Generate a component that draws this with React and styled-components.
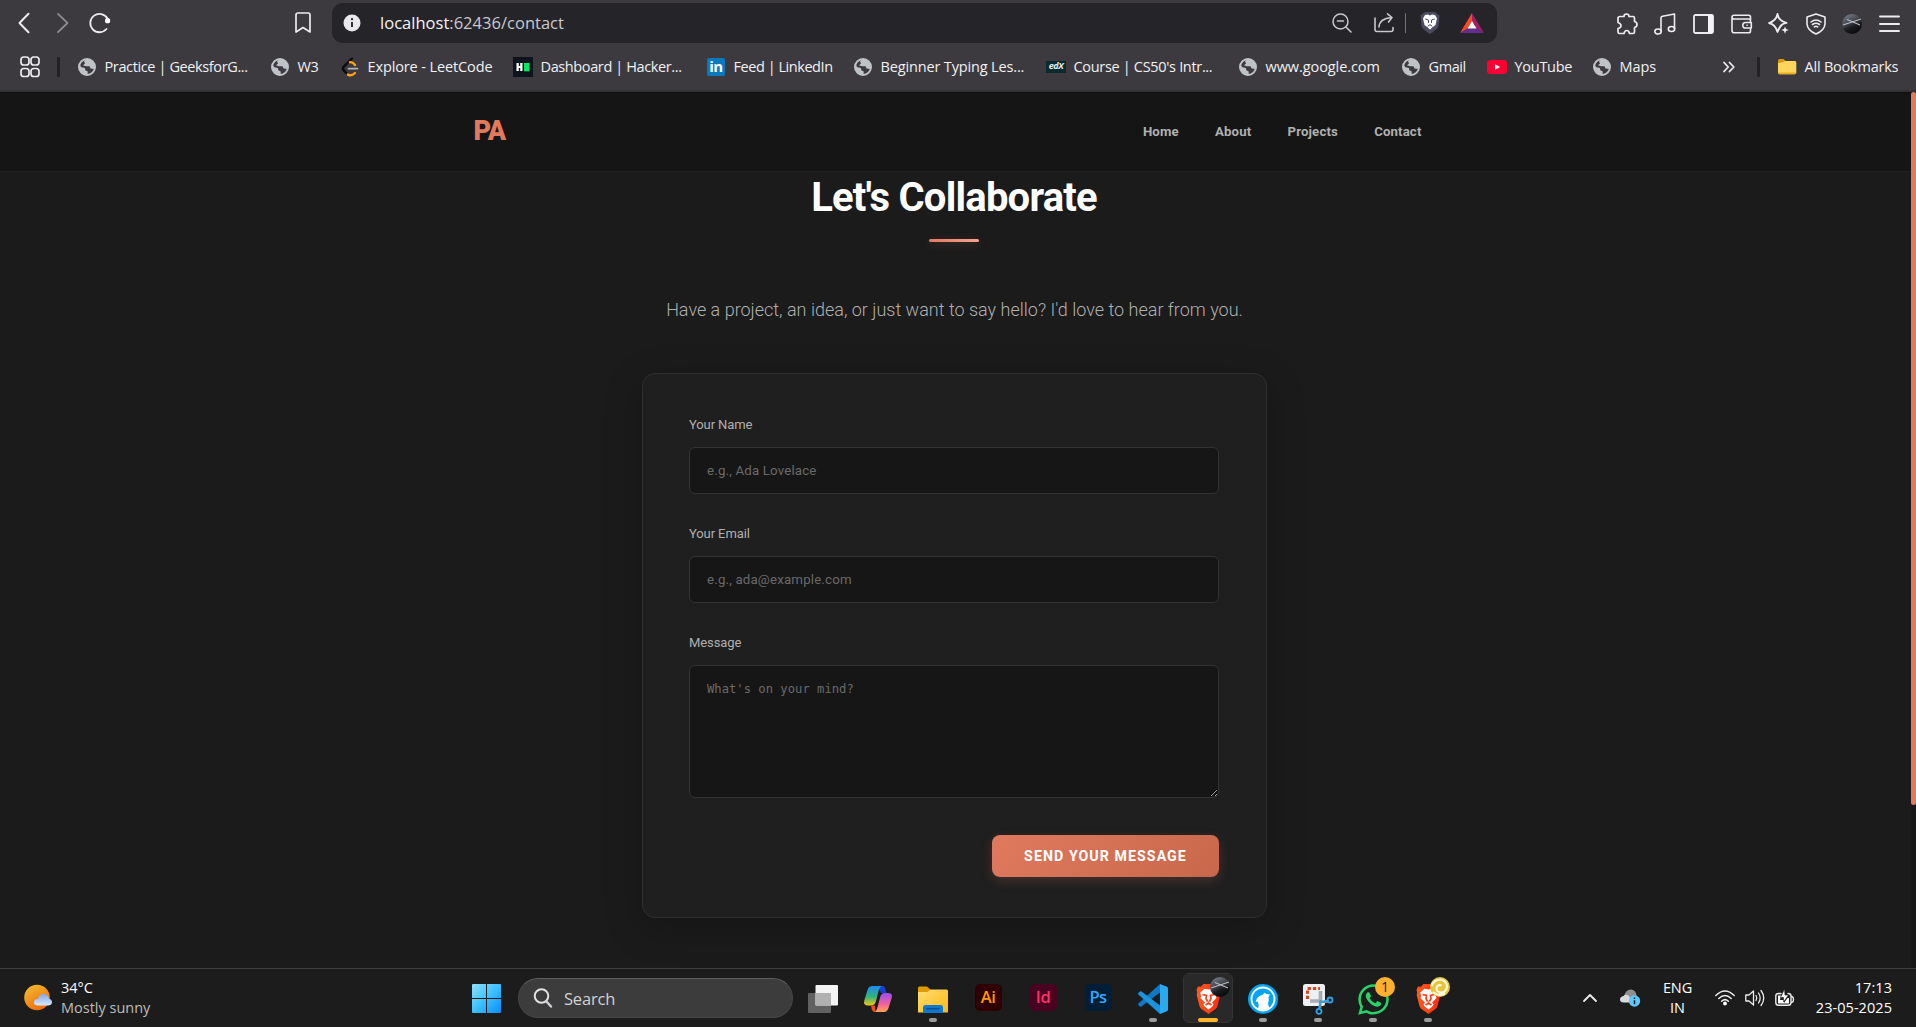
import React from "react";
import styled, { createGlobalStyle, css } from "styled-components";
import { FaWhatsapp } from "react-icons/fa";

const ui = `"Open Sans", "Noto Sans", sans-serif`;
const body = `Roboto, "Open Sans", sans-serif`;

const GlobalStyle = createGlobalStyle`
  * { box-sizing: border-box; }
  html, body { margin: 0; padding: 0; background: #1b1b1b; overflow: hidden; }
  svg { display: block; flex: none; overflow: visible; }
`;

const Screen = styled.div`
  display: flex;
  flex-direction: column;
  width: 1916px;
  height: 1027px;
  overflow: hidden;
`;

/* ---------- browser chrome ---------- */
const Chrome = styled.div`
  height: 92px;
  flex: none;
  background: #3c3a3f;
  border-bottom: 2px solid #323136;
  color: #f1f1f3;
  font-family: ${ui};
`;
const Toolbar = styled.div`
  display: flex;
  align-items: center;
  height: 47px;
  padding: 0 16px 1px 14px;
`;
const IconSlot = styled.div`
  display: flex;
  align-items: center;
  justify-content: center;
  flex: none;
  width: ${(p) => p.$w}px;
  height: 20px;
`;
const NavIcons = styled.div`
  display: flex;
  align-items: center;
  width: 318px;
`;
const AddressBar = styled.div`
  display: flex;
  align-items: center;
  width: 1165px;
  height: 40px;
  padding: 0 9px;
  border-radius: 11px;
  background: #252429;
`;
const Url = styled.div`
  flex: 1;
  padding-left: 17px;
  font-size: 16.5px;
  line-height: 22px;
  letter-spacing: 0.02px;
  color: #c9c8ce;
  b { font-weight: 400; color: #f4f4f6; }
`;
const Bar = styled.div`
  width: ${(p) => p.$w}px;
  height: 20px;
  margin: ${(p) => p.$m};
  background: ${(p) => p.$c};
  border-radius: 1px;
  flex: none;
`;
const Actions = styled.div`
  display: flex;
  align-items: center;
  margin-left: auto;
  gap: 16.6px;
  padding-top: 1px;
`;
const BookmarkRow = styled.div`
  display: flex;
  align-items: center;
  height: 40px;
  padding: 0 16px 0 20px;
`;
const BookmarkItem = styled.div`
  display: flex;
  align-items: center;
  flex: none;
  width: ${(p) => p.$w}px;
  font-size: 14.5px;
  line-height: 20px;
  letter-spacing: ${(p) => p.$ls || 0}px;
  white-space: nowrap;
  gap: 7.5px;
`;

/* ---------- web page ---------- */
const Viewport = styled.div`
  display: flex;
  height: 876px;
  flex: none;
  background: #1b1b1b;
  font-family: ${body};
`;
const Page = styled.div`
  width: 1911px;
  display: flex;
  flex-direction: column;
`;
const ScrollTrack = styled.div`
  width: 5px;
  background: #171717;
`;
const ScrollThumb = styled.div`
  height: 713px;
  border-radius: 3px;
  background: #e07a5f;
`;
const Header = styled.header`
  height: 80px;
  flex: none;
  display: flex;
  justify-content: center;
  background: #151515;
  border-top: 1px solid #0e0e0f;
  border-bottom: 1px solid #212121;
`;
const HeaderInner = styled.div`
  width: 964px;
  display: flex;
  align-items: center;
  justify-content: space-between;
  padding: 0 16px 2px 0;
`;
const Logo = styled.div`
  font-size: 27px;
  font-weight: 900;
  line-height: 32px;
  letter-spacing: -1px;
  color: #e07a5f;
`;
const Nav = styled.nav`
  display: flex;
  gap: 36.2px;
  padding-top: 2px;
`;
const NavLink = styled.a`
  font-size: 13.2px;
  line-height: 16px;
  font-weight: 700;
  letter-spacing: 0.15px;
  color: #b0b0b0;
`;
const Main = styled.main`
  display: flex;
  flex-direction: column;
  align-items: center;
  padding-right: 2px;
`;
const Title = styled.h1`
  margin: 2px 1px 0 0;
  font-size: 40px;
  line-height: 48px;
  font-weight: 700;
  letter-spacing: -0.78px;
  color: #fff;
`;
const Rule = styled.div`
  width: 50px;
  height: 3px;
  margin: 17px 1px 0 0;
  border-radius: 2px;
  background: linear-gradient(90deg, #e07a5f, #f2a48f);
  box-shadow: 0 2px 8px rgba(224, 122, 95, 0.25);
`;
const Lead = styled.p`
  margin: 56px 0 0;
  font-size: 18px;
  line-height: 24px;
  font-weight: 300;
  color: #b0b0b0;
`;
const Card = styled.form`
  width: 625px;
  height: 545px;
  margin-top: 51px;
  padding: 41px 47px 0 46px;
  border: 1px solid #2f2f2f;
  border-radius: 13px;
  background: #1f1f1f;
  box-shadow: 0 10px 38px rgba(0, 0, 0, 0.22);
  display: flex;
  flex-direction: column;
`;
const Label = styled.label`
  display: block;
  height: 32px;
  font-size: 13px;
  line-height: 20px;
  letter-spacing: -0.1px;
  color: #b0b0b0;
`;
const fieldBox = css`
  display: block;
  width: 100%;
  border: 1px solid #333;
  border-radius: 6px;
  background: #161616;
  color: #eee;
  outline: none;
  &::placeholder { color: #6a6a6a; opacity: 1; }
`;
const Input = styled.input`
  ${fieldBox}
  height: 47px;
  margin-bottom: 30px;
  padding: 0 17px;
  font: 400 13.3px ${body};
  letter-spacing: 0.16px;
`;
const TextArea = styled.textarea`
  ${fieldBox}
  height: 133px;
  padding: 15px 17px;
  font: 400 12.2px/17px "DejaVu Sans Mono", monospace;
  resize: vertical;
`;
const Submit = styled.button`
  align-self: flex-end;
  width: 227px;
  height: 42px;
  margin-top: 37px;
  padding: 0;
  border: 0;
  border-radius: 8px;
  background: linear-gradient(135deg, #e07a5f, #c8674b);
  box-shadow: 0 4px 12px rgba(224, 122, 95, 0.2);
  color: #fff;
  font: 700 14.2px/20px ${body};
  letter-spacing: 1.06px;
`;

/* ---------- taskbar ---------- */
const Taskbar = styled.div`
  display: flex;
  align-items: center;
  flex: 1;
  border-top: 1px solid #3e3e3e;
  background: #1c1c1c;
  color: #fff;
  font-family: ${ui};
`;
const Weather = styled.div`
  display: flex;
  align-items: center;
  gap: 9px;
  width: 472px;
  padding-left: 24px;
`;
const Lines = styled.div`
  width: ${(p) => p.$w || "auto"};
  font-size: 14.5px;
  line-height: 20px;
  letter-spacing: ${(p) => p.$ls || 0}px;
  text-align: ${(p) => p.$align || "left"};
  white-space: nowrap;
  span { display: block; }
  span + span { color: ${(p) => p.$second || "#fff"}; }
`;
const SearchPill = styled.div`
  display: flex;
  align-items: center;
  gap: 12px;
  width: 275px;
  height: 40px;
  margin: 0 2.5px 0 17px;
  padding: 0 15px;
  border: 1px solid #464646;
  border-top-color: #5e5e5e;
  border-radius: 20px;
  background: #3c3c3c;
  font-size: 16.5px;
  letter-spacing: -0.2px;
  color: #d2d2d2;
`;
const AppSlot = styled.div`
  width: 55px;
  height: 58px;
  flex: none;
  display: flex;
  flex-direction: column;
  align-items: center;
  justify-content: center;
`;
const AppTile = styled.div`
  position: relative;
  width: 50px;
  height: 50px;
  display: flex;
  flex-direction: column;
  align-items: center;
  padding-top: 10px;
  border-radius: 6px;
  border: 1px solid ${(p) => (p.$active ? "#343434" : "transparent")};
  background: ${(p) => (p.$active ? "#292929" : "transparent")};
`;
const AppIcon = styled.div`
  width: 30px;
  height: 30px;
  display: flex;
  align-items: center;
  justify-content: center;
  flex: none;
`;
const Marker = styled.i`
  display: block;
  width: ${(p) => (p.$active ? 20 : 8)}px;
  height: 4px;
  margin-top: 4px;
  border-radius: 2px;
  background: ${(p) => (p.$active ? "#ffb62e" : "#9c9c9c")};
`;
const Badge = styled.div`
  position: absolute;
  top: 3px;
  right: 2px;
  width: 20px;
  height: 20px;
  border-radius: 50%;
  background: ${(p) => p.$bg || "none"};
  color: #222;
  font-size: 14px;
  line-height: 20px;
  text-align: center;
`;
const AdobeTile = styled.div`
  width: 27px;
  height: 27px;
  margin: 0 0 3px;
  border-radius: 5px;
  background: ${(p) => p.$bg};
  color: ${(p) => p.$fg};
  font-weight: 600;
  font-size: 16.5px;
  line-height: 25px;
  letter-spacing: -0.5px;
  text-align: center;
`;
const Tray = styled.div`
  display: flex;
  align-items: center;
  margin-left: auto;
  padding-right: 24px;
`;

/* ---------- icons ---------- */
const line = (w = 1.6, c = "#ececef") => ({
  fill: "none",
  stroke: c,
  strokeWidth: w,
  strokeLinecap: "round",
  strokeLinejoin: "round",
});

const Globe = () => (
  <svg width="20" height="20" viewBox="0 0 20 20">
    <circle cx="10" cy="10" r="8" fill="#3c3a3f" stroke="#bfc3c8" strokeWidth="2" />
    <path d="M2.5 8 3 13.500 7.500 18 10.500 17.500 10.800 14.500 8.300 13.300 8 11 4.500 10.300Z" fill="#bfc3c8" />
    <path d="M9 2 7 4 8 6.500 6 8.300 9 9.200 12.500 9.200 13.500 11.500 17.800 12 18 7 14.500 3Z" fill="#bfc3c8" />
  </svg>
);
const LeetCode = () => (
  <svg width="20" height="20" viewBox="0 0 20 20" fill="none" strokeLinecap="round" strokeLinejoin="round">
    <path d="M12 1.500 4 9.300Q1.800 11.500 4 13.700L6.500 16.200" stroke="#0b0b0b" strokeWidth="2.400" />
    <path d="M8 17.600Q11.500 19.500 15 16" stroke="#ffa116" strokeWidth="2.400" />
    <path d="M10 5.200Q12.500 4.800 15 8" stroke="#ffa116" strokeWidth="2.400" />
    <path d="M8.500 11.600H17.500" stroke="#b3b3b3" strokeWidth="1.800" />
  </svg>
);
const HackerRank = () => (
  <svg width="20" height="20" viewBox="0 0 20 20">
    <rect width="20" height="20" fill="#0e141e" />
    <path d="M3.500 6H5.800V9H7.200V6H9.500V14H7.200V11H5.800V14H3.500Z" fill="#fff" />
    <rect x="11" y="6" width="5.500" height="8.300" fill="#00ea64" />
  </svg>
);
const LinkedInGlyph = styled.div`
  width: 18px;
  height: 18px;
  margin: 0 1px;
  border-radius: 2px;
  background: #0a7abf;
  color: #fff;
  font: 700 15px/17px ${ui};
  letter-spacing: -0.4px;
  text-align: center;
`;
const EdxGlyph = styled.div`
  width: 20px;
  height: 12px;
  background: #0b2a2f;
  color: #e6ecec;
  font: italic 700 9px/10px ${ui};
  letter-spacing: -0.4px;
  text-align: center;
`;
const YouTube = () => (
  <svg width="20" height="20" viewBox="0 0 20 20">
    <rect y="3" width="20" height="14" rx="3.500" fill="#ff0033" />
    <path d="M8 7.200 13.200 10 8 12.800Z" fill="#fff" />
  </svg>
);
const SmallFolder = () => (
  <svg width="20" height="20" viewBox="0 0 20 20">
    <path d="M1 3.500Q1 2 2.500 2H6.500L8.500 4V8H1Z" fill="#d9970b" />
    <path d="M1 6Q4 6.500 8 4H18Q19.300 4 19.300 5.500V15.500Q19.300 17.200 17.600 17.200H2.600Q1 17.200 1 15.500Z" fill="#ffd55c" />
    <path d="M1 15.500H19.300Q19.300 17.200 17.600 17.200H2.600Q1 17.200 1 15.500Z" fill="#e9ad23" />
  </svg>
);
const Planet = () => (
  <svg width="20" height="20" viewBox="0 0 20 20">
    <defs>
      <linearGradient id="planet" x1="0.200" y1="0" x2="0.700" y2="1">
        <stop offset="0" stopColor="#7b7f8a" />
        <stop offset="0.400" stopColor="#45474f" />
        <stop offset="0.650" stopColor="#1a1b1f" />
        <stop offset="1" stopColor="#08080a" />
      </linearGradient>
    </defs>
    <circle cx="10" cy="10" r="10" fill="url(#planet)" />
    <path d="M1 11 19 5M5 5.500 18 11" stroke="#b9bcc4" strokeWidth="1.100" />
  </svg>
);
const Swirl = () => (
  <svg width="20" height="20" viewBox="0 0 20 20">
    <circle cx="10" cy="10" r="10" fill="#e8c33c" />
    <path d="M1.500 9Q4 2.500 11 2.500 17 4 17 10 16 16 10 15.500 6 14.500 6.500 10.500 8 7 11.500 8.500M3 15Q8 20 15 16.500" fill="none" stroke="#fff8dc" strokeWidth="2.200" />
  </svg>
);
const Lion = () => (
  <svg width="25" height="30" viewBox="0 0 25 30">
    <defs>
      <linearGradient id="lion" x1="0" y1="0" x2="1" y2="0">
        <stop offset="0" stopColor="#ff5a1f" />
        <stop offset="1" stopColor="#fb2b12" />
      </linearGradient>
    </defs>
    <path d="M7.500 0H17.500L20 2.800 23 2.500 24.500 6 23.800 8.500 24.300 11 21.500 22Q21 24 19.500 25L12.500 30 5.500 25Q4 24 3.500 22L.7 11 1.200 8.500 .5 6 2 2.500 5 2.800Z" fill="url(#lion)" />
    <path d="M8.500 4.800 12.500 5.500 16.500 4.800 20.800 8.800 19.800 12 20.500 14 16 18.500 17.500 20.500 16.300 22.500 12.500 25.500 8.700 22.500 7.500 20.500 9 18.500 4.500 14 5.200 12 4.200 8.800Z" fill="#fff" />
    <path d="M6.500 10.500 10.500 11.500 10 14.500 11.500 17.500M18.500 10.500 14.500 11.500 15 14.500 13.500 17.500M9.500 21 12.500 19.200 15.500 21" fill="none" stroke="#fb401a" strokeWidth="1.700" />
    <path d="M11 18 12.500 17.300 14 18 12.500 19.300Z" fill="#fb401a" />
  </svg>
);

const Back = () => (
  <svg width="20" height="20" viewBox="0 0 20 20"><path d="M14.500 .8 5.500 10l9 9.200" {...line(2)} /></svg>
);
const Forward = () => (
  <svg width="20" height="20" viewBox="0 0 20 20"><path d="M5 .8 14.500 10 5 19.200" {...line(1.8, "#8b8a8f")} /></svg>
);
const Reload = () => (
  <svg width="22" height="22" viewBox="0 0 22 22">
    <path d="M17.500 17A9.200 9.200 0 1 1 18.500 6.500" {...line(1.8)} />
    <circle cx="18.600" cy="8.700" r="2.600" fill="#fff" />
  </svg>
);
const BookmarkIcon = () => (
  <svg width="16" height="22" viewBox="0 0 16 22">
    <path d="M3 1H13Q15 1 15 3V20L8 15.500 1 20V3Q1 1 3 1Z" {...line(1.7)} />
  </svg>
);
const Info = () => (
  <svg width="18" height="18" viewBox="0 0 18 18">
    <circle cx="9" cy="9" r="8.500" fill="#e9e8ee" />
    <path d="M9 8V13" stroke="#252429" strokeWidth="1.900" />
    <circle cx="9" cy="5.200" r="1.150" fill="#252429" />
  </svg>
);
const ZoomOut = () => (
  <svg width="20" height="20" viewBox="0 0 20 20">
    <circle cx="8.500" cy="8.500" r="7.500" {...line(1.5, "#c8c7cc")} />
    <path d="M5.500 8H11.500M14 14 19 19" {...line(1.6, "#c8c7cc")} />
  </svg>
);
const Share = () => (
  <svg width="20" height="20" viewBox="0 0 20 20">
    <path d="M1 5V16.500Q1 18.500 3 18.500H17Q19 18.500 19 16.500V14.500M5 14Q5.500 5.500 17.500 4.500M13.500 .8 18 4.500 14.500 9" {...line(1.6, "#c8c7cc")} />
  </svg>
);
const ShieldLion = () => (
  <svg width="20" height="22" viewBox="0 0 20 22">
    <path d="M5 0H15L19.500 3.500 18.500 14Q18 17 10 22 2 17 1.500 14L.5 3.500Z" fill="#4a4b5e" />
    <path d="M5 3 8 2.500 10 3.500 12 2.500 15 3 17 6.500 15.500 13 12.800 15 10 17.500 7.200 15 4.500 13 3 6.500Z" fill="#fff" />
    <path d="M5.500 7 8.500 8V10.500M14.500 7 11.500 8V10.500M8 14 10 12.700 12 14" {...line(1, "#4a4b5e")} />
  </svg>
);
const Bat = () => (
  <svg width="24" height="20" viewBox="0 0 24 20">
    <path d="M12 0 0 20 7.500 15.500 12 8Z" fill="#ff4724" />
    <path d="M12 0 24 20 16.500 15.500 12 8Z" fill="#9e1f63" />
    <path d="M0 20H24L16.500 15.500H7.500Z" fill="#662d91" />
    <path d="M12 8 16.500 15.500H7.500Z" fill="#fff" />
  </svg>
);
const Puzzle = () => (
  <svg width="22" height="22" viewBox="0 0 22 22">
    <path d="M4 3.500H8Q8 1 10.500 1T13 3.500H17Q18.500 3.500 18.500 5V8.500Q21 9 21 11.500T18.500 14.500V19Q18.500 20.500 17 20.500H13.500Q13 17.500 10.800 17.500T8 20.500H3.500Q2 20.500 2 19V15.500Q5 15 5 12.800T2 9.500V5.500Q2 3.500 4 3.500Z" {...line(1.7)} />
  </svg>
);
const Music = () => (
  <svg width="22" height="22" viewBox="0 0 22 22">
    <path d="M7 18V5Q7 3.500 8.500 3.200L20.500 1V15.500" {...line(1.6)} />
    <ellipse cx="4" cy="18.500" rx="3.200" ry="2.500" {...line(1.6)} />
    <ellipse cx="17.500" cy="16" rx="3.200" ry="2.500" {...line(1.6)} />
  </svg>
);
const Sidebar = () => (
  <svg width="21" height="20" viewBox="0 0 21 20">
    <rect x="1" y="1" width="19" height="18" rx="1.500" {...line(1.8)} />
    <path d="M15 1H20V19H15Z" fill="#f4f4f6" />
  </svg>
);
const Wallet = () => (
  <svg width="21" height="20" viewBox="0 0 21 20">
    <path d="M19.500 6V3Q19.500 1.200 17.800 1.200H3Q1 1.200 1 3.200V16.500Q1 18.800 3.200 18.800H17.500Q19.500 18.800 19.500 17V15M1 3.200Q1 5 3 5H17.500Q19.500 5 19.500 7V8.500H14.500Q11.800 8.500 11.800 11.300T14.500 14H20.300V8.500H18M16 11.200H16.200" {...line(1.6)} />
  </svg>
);
const Sparkle = () => (
  <svg width="21" height="21" viewBox="0 0 21 21">
    <path d="M9.500 1Q10.500 8 18.500 9.800 15 10.500 13.500 12 11.500 14 9.500 19 7.500 11.500 1 10 8 8 9.500 1Z" {...line(1.8)} />
    <path d="M17 13.500 18 16 20.800 17 18 18 17 20.800 16 18 13.300 17 16 16Z" fill="#f1f1f3" />
  </svg>
);
const VpnShield = () => (
  <svg width="20" height="22" viewBox="0 0 20 22">
    <path d="M10 1 19 4V11Q18.500 17.500 10 21 1.500 17.500 1 11V4Z" {...line(1.6)} />
    <path d="M5 9Q10 5 15 9M6.500 11.500Q10 9 13.500 11.500M8.300 13.800Q10 12.700 11.700 13.800" {...line(1.6)} />
  </svg>
);
const Menu = () => (
  <svg width="21" height="18" viewBox="0 0 21 18"><path d="M1 1.500H20M1 9H20M1 16H20" {...line(1.9)} /></svg>
);
const Apps = () => (
  <svg width="20" height="22" viewBox="0 0 20 22">
    {[[1, 1], [11, 1], [1, 12.5], [11, 12.5]].map(([x, y]) => (
      <rect key={`${x}-${y}`} x={x} y={y} width="8" height="8" rx="2.800" {...line(1.7)} />
    ))}
  </svg>
);
const Chevrons = () => (
  <svg width="12" height="12" viewBox="0 0 12 12"><path d="M1 1.500 5.200 6 1 10.500M6.500 1.500 10.800 6 6.500 10.500" {...line(1.8)} /></svg>
);

const SunCloud = () => (
  <svg width="28" height="28" viewBox="0 0 28 28">
    <defs>
      <linearGradient id="sun" x1="0" y1="0" x2="0.600" y2="1">
        <stop offset="0" stopColor="#f3c22e" />
        <stop offset="1" stopColor="#ef6c11" />
      </linearGradient>
      <linearGradient id="cloud" x1="0" y1="0" x2="0" y2="1">
        <stop offset="0" stopColor="#7ea9ee" />
        <stop offset="1" stopColor="#dbe8fb" />
      </linearGradient>
    </defs>
    <circle cx="13" cy="13.500" r="12.800" fill="url(#sun)" />
    <path d="M14 21.500Q10 21.500 10 18.300T14 15Q15 10 19.500 10T25 14.700Q28 15.500 28 18.300T24.500 21.500Z" fill="url(#cloud)" />
  </svg>
);
const WindowsLogo = () => (
  <svg width="29" height="29" viewBox="0 0 29 29">
    <defs>
      <linearGradient id="win" x1="0" y1="0" x2="29" y2="29" gradientUnits="userSpaceOnUse">
        <stop offset="0" stopColor="#8ce2ff" />
        <stop offset="0.500" stopColor="#3cc0ff" />
        <stop offset="1" stopColor="#0a8dff" />
      </linearGradient>
    </defs>
    <path d="M1 0H14V14H0V1Q0 0 1 0ZM15 0H28Q29 0 29 1V14H15ZM0 15H14V29H1Q0 29 0 28ZM15 15H29V28Q29 29 28 29H15Z" fill="url(#win)" />
  </svg>
);
const SearchIcon = () => (
  <svg width="18" height="20" viewBox="0 0 18 20">
    <circle cx="7.500" cy="8" r="6.800" {...line(2, "#e2e2e2")} />
    <path d="M12.500 13.500 17 18.500" {...line(2.400, "#cfd3d8")} />
  </svg>
);
const TaskView = () => (
  <svg width="30" height="29" viewBox="0 0 30 29">
    <rect x="0" y="8" width="23" height="20" rx="1" fill="#616161" />
    <rect x="7.500" y="0" width="22.500" height="20.500" rx="1" fill="#f3f3f3" />
    <rect x="7.500" y="8" width="15.500" height="12.500" fill="#b1b1b1" />
  </svg>
);
const Copilot = () => (
  <svg width="28" height="29" viewBox="0 0 28 29">
    <defs>
      <linearGradient id="cpL" x1="0" y1="0" x2="0" y2="1">
        <stop offset="0" stopColor="#1c8cf0" />
        <stop offset="0.550" stopColor="#2fb47c" />
        <stop offset="1" stopColor="#f5c518" />
      </linearGradient>
      <linearGradient id="cpR" x1="0" y1="0" x2="0" y2="1">
        <stop offset="0" stopColor="#9a4df0" />
        <stop offset="0.550" stopColor="#ee5fa0" />
        <stop offset="1" stopColor="#ffa552" />
      </linearGradient>
    </defs>
    <path d="M14 1H18.500Q20.500 1 21 3L22.500 8H17Z" fill="#1a3fcf" />
    <path d="M8.500 1H18Q15.500 2 14.800 5L12 16Q10.800 20.500 7 20.500H4Q-1 20.500 .3 15.500L3.500 5Q4.700 1 8.500 1Z" fill="url(#cpL)" />
    <path d="M7 20.500H11L11.500 27Q8.500 27 7.800 24.500Z" fill="#ee4b2b" />
    <path d="M20 27H10.500Q12.500 26 13.300 23L16.200 12Q17.200 8 21 8H24Q29 8 27.700 13L24.500 23Q23.200 27 20 27Z" fill="url(#cpR)" />
  </svg>
);
const Folder = () => (
  <svg width="30" height="29" viewBox="0 0 30 29">
    <defs>
      <linearGradient id="fold" x1="0" y1="0" x2="1" y2="1">
        <stop offset="0" stopColor="#ffde74" />
        <stop offset="1" stopColor="#fdb813" />
      </linearGradient>
    </defs>
    <path d="M0 3Q0 1.500 1.500 1.500H9L12.500 4.500V10H0Z" fill="#e09a05" />
    <path d="M0 7H9.500L12.500 4.500H28.500Q30 4.500 30 6V27.500H0Z" fill="url(#fold)" />
    <path d="M5 28V22.500Q5 20 7.500 20H22.500Q25 20 25 22.500V28Z" fill="#0f78d0" />
    <path d="M9 23.700H21" {...line(1.4, "#084f93")} />
  </svg>
);
const VSCode = () => (
  <svg width="30" height="30" viewBox="0 0 30 30">
    <path d="M22 0 29 2.800Q30 3.300 30 4.500V25.500Q30 26.700 29 27.200L22 30Z" fill="#29a9f2" />
    <path d="M22 0V8.500L3.500 22.500Q2.700 23 2 22.500L.4 21Q-.3 20.200 .4 19.500Z" fill="#0d79c4" />
    <path d="M22 30V21.500L3.500 7.500Q2.700 7 2 7.500L.4 9Q-.3 9.800 .4 10.500Z" fill="#1b94df" />
  </svg>
);
const LibreWolf = () => (
  <svg width="30" height="30" viewBox="0 0 30 30">
    <circle cx="15" cy="15" r="15" fill="#00a5f5" />
    <circle cx="15" cy="15" r="11.500" fill="none" stroke="#fff" strokeWidth="1.800" />
    <path d="M7.500 18Q9 12 14.500 11L16.500 8.500 18.500 10 22 10.500 20.500 13 20.800 16 20 20 21.500 24.500Q15 28 10 25 11.500 20.500 9.500 17.500Z" fill="#fff" />
  </svg>
);
const Snip = () => (
  <svg width="30" height="30" viewBox="0 0 30 30">
    <rect width="22" height="22" rx="2.500" fill="#eef0f3" />
    <path d="M4.500 15V4.500H17" fill="none" stroke="#d2441c" strokeWidth="3" strokeDasharray="3.300 2" />
    <path d="M7 17H19M17.500 7V19" stroke="#a6adb6" strokeWidth="3.600" />
    <path d="M16 18H25M17.500 16V24" stroke="#7e8790" strokeWidth="2" />
    <circle cx="27" cy="16" r="2.500" {...line(1.800, "#2ea3e8")} />
    <circle cx="16" cy="27.300" r="2.500" {...line(1.800, "#2ea3e8")} />
    <path d="M18 18 25 16.500M17 19 16 25" {...line(1.800, "#2ea3e8")} />
  </svg>
);

const CaretUp = () => (
  <svg width="14" height="8" viewBox="0 0 14 8"><path d="M1 7 7 1 13 7" {...line(1.800)} /></svg>
);
const CloudInfo = () => (
  <svg width="20" height="18" viewBox="0 0 20 18">
    <path d="M4 7Q6 0 11.500 .5 16 1.500 16.500 6.500L12 13H4Z" fill="#8f8f8f" />
    <path d="M3.500 13.500Q0 13.500 0 10.500T3.500 7Q6 4.500 9 7L12 13.500Z" fill="#d9d9d9" />
    <circle cx="14.500" cy="12" r="5.700" fill="#5ec8fa" />
    <path d="M14.500 11.200V15.200M14.500 8.500V9.900" stroke="#10222c" strokeWidth="1.500" />
  </svg>
);
const Wifi = () => (
  <svg width="20" height="16" viewBox="0 0 20 16">
    <path d="M.8 5.500Q10-3.500 19.200 5.500M3.800 8.500Q10 2.500 16.200 8.500M6.600 11.300Q10 8 13.400 11.300" {...line(1.5)} />
    <circle cx="10" cy="13.500" r="1.900" fill="#fff" />
  </svg>
);
const Speaker = () => (
  <svg width="20" height="18" viewBox="0 0 20 18">
    <path d="M.8 6V12H4L8.500 16V2L4 6ZM11 6.500Q12.500 9 11 11.500M13.500 4Q16.800 9 13.500 14M16 1.500Q21.500 9 16 16.500" {...line(1.300)} />
  </svg>
);
const Battery = () => (
  <svg width="19" height="18" viewBox="0 0 19 18">
    <path d="M6 4.500H3.500Q.8 4.500 .8 7V13.500Q.8 16.300 3.500 16.300H13Q16 16.300 16 13.500V7Q16 4.500 13 4.500M17 7.500Q18.500 8 18.500 10.500T17 13.300" {...line(1.400)} />
    <path d="M3 6.500H6L5 11H9V14L12.500 9H14V14.500H3Z" fill="#fff" />
    <path d="M9.500 0 5.500 8.500H8.500V13L13.500 6H10Z" fill="#fff" stroke="#1c1c1c" strokeWidth=".6" />
  </svg>
);

const bookmarks = [
  { icon: <Globe />, text: "Practice | GeeksforG...", w: 193, ls: -0.38 },
  { icon: <Globe />, text: "W3", w: 70, ls: -0.3 },
  { icon: <LeetCode />, text: "Explore - LeetCode", w: 173, ls: -0.12 },
  { icon: <HackerRank />, text: "Dashboard | Hacker...", w: 193, ls: -0.38 },
  { icon: <LinkedInGlyph>in</LinkedInGlyph>, text: "Feed | LinkedIn", w: 147, ls: -0.45 },
  { icon: <Globe />, text: "Beginner Typing Les...", w: 193, ls: -0.15 },
  { icon: <EdxGlyph>edX</EdxGlyph>, text: "Course | CS50's Intr...", w: 192, ls: -0.32 },
  { icon: <Globe />, text: "www.google.com", w: 163, ls: -0.08 },
  { icon: <Globe />, text: "Gmail", w: 86, ls: -0.4 },
  { icon: <YouTube />, text: "YouTube", w: 105, ls: -0.28 },
  { icon: <Globe />, text: "Maps", w: 131, ls: -0.1 },
];

const apps = [
  { name: "taskview", icon: <TaskView /> },
  { name: "copilot", icon: <Copilot /> },
  { name: "explorer", icon: <Folder />, open: true },
  { name: "illustrator", icon: <AdobeTile $bg="#300000" $fg="#ff9a00">Ai</AdobeTile> },
  { name: "indesign", icon: <AdobeTile $bg="#49021f" $fg="#ff3366">Id</AdobeTile> },
  { name: "photoshop", icon: <AdobeTile $bg="#001e36" $fg="#31a8ff">Ps</AdobeTile> },
  { name: "code", icon: <VSCode />, open: true },
  { name: "brave", icon: <Lion />, open: true, active: true, badge: <Badge><Planet /></Badge> },
  { name: "librewolf", icon: <LibreWolf />, open: true },
  { name: "snip", icon: <Snip />, open: true },
  { name: "whatsapp", icon: <FaWhatsapp size={35} color="#25d366" />, open: true, badge: <Badge $bg="#ffb02e">1</Badge> },
  { name: "brave2", icon: <Lion />, open: true, badge: <Badge><Swirl /></Badge> },
];

export default function App() {
  return (
    <Screen>
      <GlobalStyle />
      <Chrome>
        <Toolbar>
          <NavIcons>
            <IconSlot $w={20}><Back /></IconSlot>
            <IconSlot $w={57}><Forward /></IconSlot>
            <IconSlot $w={17}><Reload /></IconSlot>
            <IconSlot $w={390}><BookmarkIcon /></IconSlot>
          </NavIcons>
          <AddressBar>
            <IconSlot $w={22}><Info /></IconSlot>
            <Url><b>localhost</b>:62436/contact</Url>
            <IconSlot $w={20}><ZoomOut /></IconSlot>
            <IconSlot $w={64}><Share /></IconSlot>
            <Bar $w={1} $m="0 14px 0 -11px" $c="#77767c" />
            <IconSlot $w={20}><ShieldLion /></IconSlot>
            <IconSlot $w={64}><Bat /></IconSlot>
            <Bar $w={0} $m="0 -16px 0 0" $c="transparent" />
          </AddressBar>
          <Actions>
            <Puzzle />
            <Music />
            <Sidebar />
            <Wallet />
            <Sparkle />
            <VpnShield />
            <Planet />
            <Menu />
          </Actions>
        </Toolbar>
        <BookmarkRow>
          <Apps />
          <Bar $w={3} $m="0 17px" $c="#222126" />
          {bookmarks.map((b) => (
            <BookmarkItem key={b.text} $w={b.w} $ls={b.ls}>
              {b.icon}
              {b.text}
            </BookmarkItem>
          ))}
          <Chevrons />
          <Bar $w={3} $m="0 17px 0 22px" $c="#222126" />
          <BookmarkItem $w={123} $ls={-0.22}>
            <SmallFolder />
            All Bookmarks
          </BookmarkItem>
        </BookmarkRow>
      </Chrome>

      <Viewport>
        <Page>
          <Header>
            <HeaderInner>
              <Logo>PA</Logo>
              <Nav>
                <NavLink>Home</NavLink>
                <NavLink>About</NavLink>
                <NavLink>Projects</NavLink>
                <NavLink>Contact</NavLink>
              </Nav>
            </HeaderInner>
          </Header>
          <Main>
            <Title>Let's Collaborate</Title>
            <Rule />
            <Lead>Have a project, an idea, or just want to say hello? I'd love to hear from you.</Lead>
            <Card>
              <Label htmlFor="name">Your Name</Label>
              <Input id="name" placeholder="e.g., Ada Lovelace" />
              <Label htmlFor="email">Your Email</Label>
              <Input id="email" placeholder="e.g., ada@example.com" />
              <Label htmlFor="message">Message</Label>
              <TextArea id="message" placeholder="What's on your mind?" />
              <Submit type="button">SEND YOUR MESSAGE</Submit>
            </Card>
          </Main>
        </Page>
        <ScrollTrack>
          <ScrollThumb />
        </ScrollTrack>
      </Viewport>

      <Taskbar>
        <Weather>
          <SunCloud />
          <Lines $second="#bdbdbd">
            <span>34°C</span>
            <span>Mostly sunny</span>
          </Lines>
        </Weather>
        <WindowsLogo />
        <SearchPill>
          <SearchIcon />
          Search
        </SearchPill>
        {apps.map((a) => (
          <AppSlot key={a.name}>
            <AppTile $active={a.active}>
              <AppIcon>{a.icon}</AppIcon>
              {a.open && <Marker $active={a.active} />}
              {a.badge}
            </AppTile>
          </AppSlot>
        ))}
        <Tray>
          <IconSlot $w={34}><CaretUp /></IconSlot>
          <IconSlot $w={46}><CloudInfo /></IconSlot>
          <Lines $w="49px" $align="center" $ls={-0.1}>
            <span>ENG</span>
            <span>IN</span>
          </Lines>
          <IconSlot $w={46}><Wifi /></IconSlot>
          <IconSlot $w={14}><Speaker /></IconSlot>
          <IconSlot $w={45}><Battery /></IconSlot>
          <Lines $w="85px" $align="right" $ls={0.05}>
            <span>17:13</span>
            <span>23-05-2025</span>
          </Lines>
        </Tray>
      </Taskbar>
    </Screen>
  );
}
